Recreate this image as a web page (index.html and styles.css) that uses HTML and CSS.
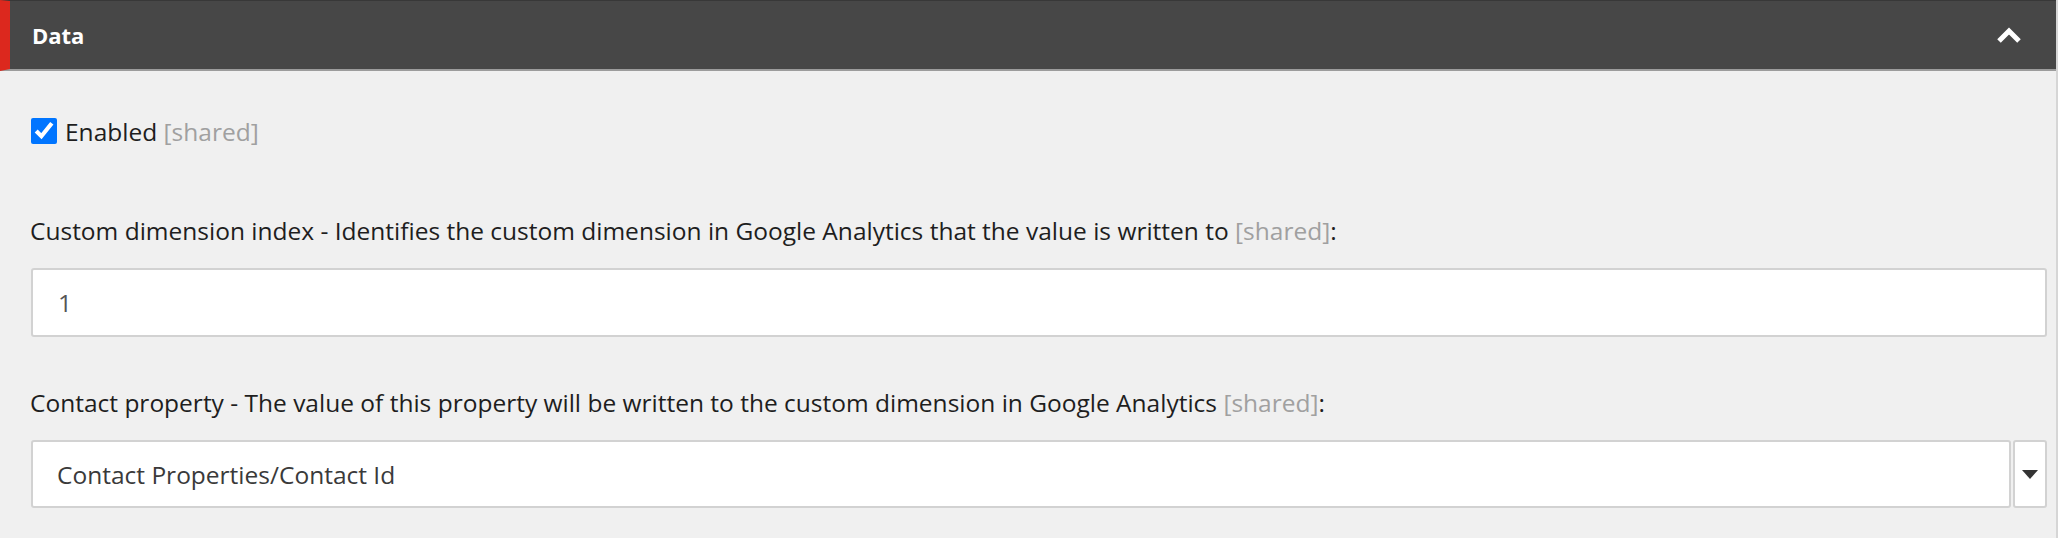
FILE: index.html
```html
<!DOCTYPE html>
<html lang="en">
    <head>
        <meta charset="utf-8" />
        <title>Data</title>
        <link rel="stylesheet" href="styles.css">
    </head>

    <body>
        <div class="section">
            <div class="section-header">
                <span class="section-title">Data</span>
                <svg class="chevron" width="26" height="17" viewBox="0 0 26 17">
                    <polyline points="3,14 13,4 23,14" fill="none" stroke="#fff" stroke-width="5" stroke-linejoin="miter" />
                </svg>
            </div>

            <div class="section-body">
                <div class="check-row">
                    <input type="checkbox" checked id="enabled">
                    <label for="enabled">Enabled <span class="shared">[shared]</span></label>
                </div>

                <div class="field">
                    <div class="field-label">Custom dimension index - Identifies the custom dimension in Google Analytics that the value is written to <span class="shared">[shared]</span>:</div>
                    <input class="text-input" type="text" value="1">
                </div>

                <div class="field">
                    <div class="field-label">Contact property - The value of this property will be written to the custom dimension in Google Analytics <span class="shared">[shared]</span>:</div>
                    <div class="select">
                        <div class="select-value">Contact Properties/Contact Id</div>
                        <div class="select-arrow">
                            <svg width="16" height="9" viewBox="0 0 16 9">
                                <polygon points="0,0 16,0 8,9" fill="#333" />
                            </svg>
                        </div>
                    </div>
                </div>
            </div>
        </div>
    </body>
</html>
```

FILE: styles.css
```css
html, body {
    margin: 0;
    padding: 0;
}
body {
    font-family: "Open Sans", "Liberation Sans", sans-serif;
    font-size: 24.5px;
    color: #1e1e1e;
    background: #f0f0f0;
}
.section {
    border-right: 2px solid #d6d6d6;
    min-height: 538px;
    box-sizing: border-box;
}
.section-header {
    display: flex;
    align-items: center;
    justify-content: space-between;
    height: 71px;
    box-sizing: border-box;
    background: #474747;
    border-top: 1px solid #383838;
    border-left: 10px solid #dc281e;
    border-bottom: 2px solid #9c9c9c;
    padding: 0 34px 0 22px;
}
.section-title {
    color: #fff;
    font-weight: bold;
    font-size: 22px;
}
.chevron {
    display: block;
}
.section-body {
    padding: 44px 9px 30px 31px;
}
.check-row {
    display: flex;
    align-items: center;
    height: 32px;
    margin-bottom: 68px;
}
.check-row input {
    width: 26px;
    height: 26px;
    margin: 0 8px 0 0;
}
.shared {
    color: #a0a0a0;
}
.field {
    display: flex;
    flex-direction: column;
    gap: 21px;
    margin-bottom: 50px;
}
.field:last-child {
    margin-bottom: 0;
}
.field-label {
    line-height: 32px;
    margin-left: -1px;
}
.text-input {
    height: 69px;
    box-sizing: border-box;
    border: 2px solid #d2d2d2;
    border-radius: 3px;
    background: #fff;
    padding: 0 25px;
    font-family: inherit;
    font-size: 24.5px;
    color: #555;
    outline: none;
}
.select {
    display: flex;
    gap: 2px;
    height: 68px;
}
.select-value {
    flex: 1;
    display: flex;
    align-items: center;
    border: 2px solid #d2d2d2;
    border-radius: 3px;
    background: #fff;
    padding: 0 24px;
    color: #3a3a3a;
}
.select-arrow {
    width: 34px;
    display: flex;
    align-items: center;
    justify-content: center;
    box-sizing: border-box;
    border: 2px solid #d2d2d2;
    border-radius: 3px;
    background: #fff;
}
.select-arrow svg {
    display: block;
}
```
